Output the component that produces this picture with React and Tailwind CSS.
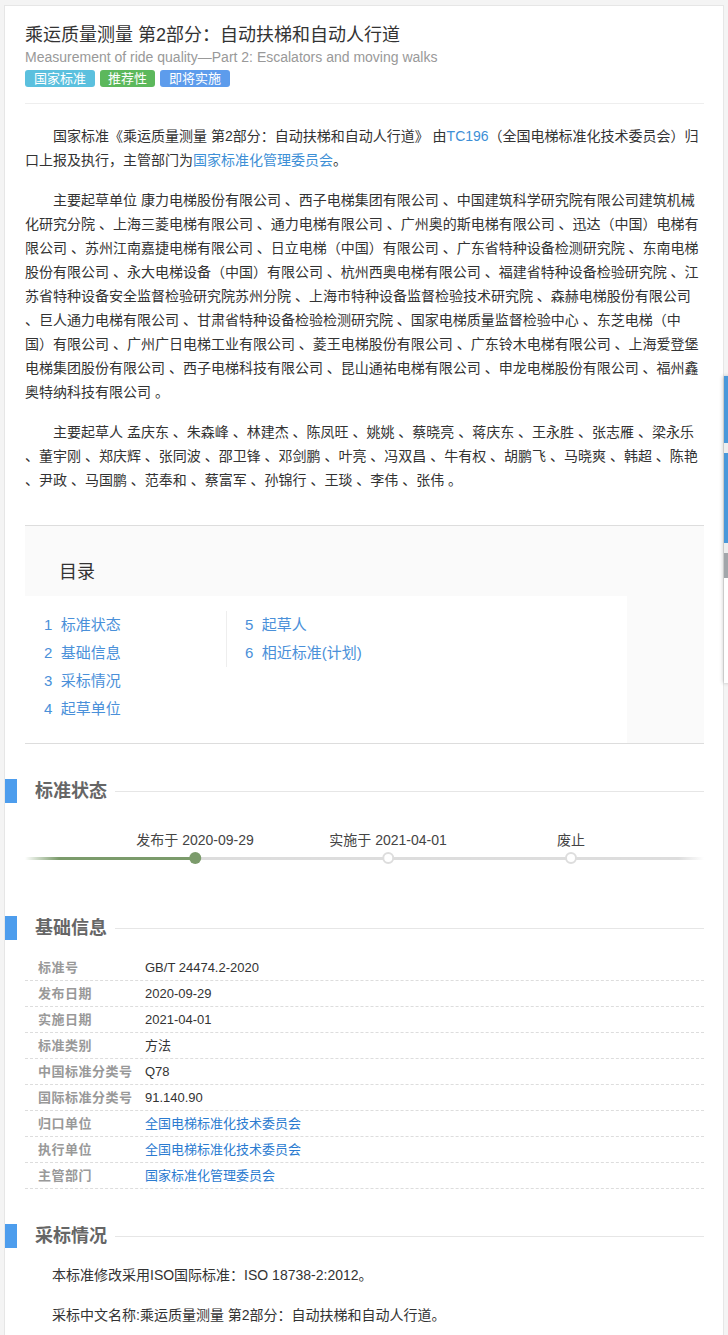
const Header = ({ children, className = '' }) => (
  <div className={`-ml-5 flex h-6 items-center ${className}`}>
    <span className="h-6 w-3 bg-[#4d9ded]" />
    <h2 className="ml-[18px] text-[18px] font-bold leading-6 text-[#666]">{children}</h2>
    <span className="ml-2 h-px flex-1 bg-[#e6e6e6]" />
  </div>
);

const rows = [
  ['标准号', 'GB/T 24474.2-2020'],
  ['发布日期', '2020-09-29'],
  ['实施日期', '2021-04-01'],
  ['标准类别', '方法'],
  ['中国标准分类号', 'Q78'],
  ['国际标准分类号', '91.140.90'],
  ['归口单位', '全国电梯标准化技术委员会', true],
  ['执行单位', '全国电梯标准化技术委员会', true],
  ['主管部门', '国家标准化管理委员会', true],
];

const units =
  '康力电梯股份有限公司 、西子电梯集团有限公司 、中国建筑科学研究院有限公司建筑机械化研究分院 、上海三菱电梯有限公司 、通力电梯有限公司 、广州奥的斯电梯有限公司 、迅达（中国）电梯有限公司 、苏州江南嘉捷电梯有限公司 、日立电梯（中国）有限公司 、广东省特种设备检测研究院 、东南电梯股份有限公司 、永大电梯设备（中国）有限公司 、杭州西奥电梯有限公司 、福建省特种设备检验研究院 、江苏省特种设备安全监督检验研究院苏州分院 、上海市特种设备监督检验技术研究院 、森赫电梯股份有限公司 、巨人通力电梯有限公司 、甘肃省特种设备检验检测研究院 、国家电梯质量监督检验中心 、东芝电梯（中国）有限公司 、广州广日电梯工业有限公司 、菱王电梯股份有限公司 、广东铃木电梯有限公司 、上海爱登堡电梯集团股份有限公司 、西子电梯科技有限公司 、昆山通祐电梯有限公司 、申龙电梯股份有限公司 、福州鑫奥特纳科技有限公司 。';

const people =
  '孟庆东 、朱森峰 、林建杰 、陈凤旺 、姚姚 、蔡晓亮 、蒋庆东 、王永胜 、张志雁 、梁永乐 、董宇刚 、郑庆辉 、张同波 、邵卫锋 、邓剑鹏 、叶亮 、冯双昌 、牛有权 、胡鹏飞 、马晓爽 、韩超 、陈艳 、尹政 、马国鹏 、范奉和 、蔡富军 、孙锦行 、王琰 、李伟 、张伟 。';

const steps = [
  { label: '发布于 2020-09-29', x: 'left-[170px]', done: true },
  { label: '实施于 2021-04-01', x: 'left-[363px]' },
  { label: '废止', x: 'left-[546px]' },
];

export default function App() {
  return (
    <div className="relative min-h-[1335px] bg-[#f4f4f4] pl-1 pt-[5px] font-['Liberation_Sans','Noto_Sans_CJK_SC',sans-serif] text-[#333]">
      <div className="w-[720px] border border-[#e6e6e6] bg-white pb-10 pl-5 pr-[19px] pt-[17px]">
        {/* title */}
        <h1 className="text-[18px] font-normal leading-6 text-[#333]">乘运质量测量 第2部分：自动扶梯和自动人行道</h1>
        <p className="text-[14px] leading-5 text-[#999]">Measurement of ride quality—Part 2: Escalators and moving walks</p>
        <div className="mt-[3px] flex gap-[5px]">
          <span className="rounded-[3px] bg-[#5bc0de] px-[9px] text-[13px] leading-[17px] text-white">国家标准</span>
          <span className="rounded-[3px] bg-[#5cb85c] px-[8px] text-[13px] leading-[17px] text-white">推荐性</span>
          <span className="rounded-[3px] bg-[#5d9cec] px-[9px] text-[13px] leading-[17px] text-white">即将实施</span>
        </div>
        <div className="mt-4 h-px bg-[#eee]" />

        {/* intro */}
        <div className="mt-5 space-y-4 text-[14px] leading-6 text-[#333]">
          <p className="indent-[28px]">
            国家标准《乘运质量测量 第2部分：自动扶梯和自动人行道》 由<a className="text-[#3d8fd6]">TC196</a>（全国电梯标准化技术委员会）归口上报及执行，主管部门为<a className="text-[#3d8fd6]">国家标准化管理委员会</a>。
          </p>
          <p className="mr-[4px] indent-[28px]">主要起草单位 {units}</p>
          <p className="indent-[28px]">主要起草人 {people}</p>
        </div>

        {/* toc */}
        <div className="mt-[33px] border-y border-[#ddd] bg-[#fafafa] pt-[34px]">
          <h3 className="pl-[34px] text-[18px] font-normal leading-6 text-[#333]">目录</h3>
          <div className="mt-3 flex w-[602px] bg-white pb-5 pt-[15px] text-[15px] leading-7 text-[#4a90d9]">
            <ul className="w-[201px] pl-[19px]">
              <li>1&nbsp; 标准状态</li>
              <li>2&nbsp; 基础信息</li>
              <li>3&nbsp; 采标情况</li>
              <li>4&nbsp; 起草单位</li>
            </ul>
            <ul className="self-start border-l border-[#eee] pl-[18px]">
              <li>5&nbsp; 起草人</li>
              <li>6&nbsp; 相近标准(计划)</li>
            </ul>
          </div>
        </div>

        {/* status */}
        <Header className="mt-[35px]">标准状态</Header>
        <div className="relative mt-[27px] h-[80px]">
          <div className="absolute left-0 top-[27px] h-[3px] w-[170px] bg-linear-to-r from-white from-0% to-[#7b9b6b] to-20%" />
          <div className="absolute left-[170px] right-0 top-[27px] h-[3px] bg-linear-to-r from-[#ddd] via-[#ddd] via-95% to-white" />
          {steps.map((s) => (
            <div key={s.label} className={`absolute top-0 ${s.x} flex -translate-x-1/2 flex-col items-center`}>
              <span className="whitespace-nowrap text-[14px] leading-5 text-[#444]">{s.label}</span>
              <span
                className={`mt-[2px] h-3 w-3 rounded-full ${
                  s.done ? 'bg-[#7b9b6b]' : 'border-2 border-[#ddd] bg-white'
                }`}
              />
            </div>
          ))}
        </div>

        {/* basic info */}
        <Header className="mt-[6px]">基础信息</Header>
        <div className="mt-[15px]">
          {rows.map(([k, v, link]) => (
            <div key={k} className="flex h-[26px] items-center border-b border-dashed border-[#ddd] text-[13px]">
              <span className="w-[120px] pl-[13px] font-bold tracking-[0.5px] text-[#999]">{k}</span>
              <span className={link ? 'text-[#2b7bd0]' : 'text-[#333]'}>{v}</span>
            </div>
          ))}
        </div>

        {/* adoption */}
        <Header className="mt-[35px]">采标情况</Header>
        <div className="mt-[15px] space-y-4 text-[14px] leading-6 text-[#333]">
          <p className="indent-[27px]">本标准修改采用ISO国际标准：ISO 18738-2:2012。</p>
          <p className="indent-[27px]">采标中文名称:乘运质量测量 第2部分：自动扶梯和自动人行道。</p>
        </div>
      </div>

      {/* floating side panel, mostly off-screen */}
      <div className="absolute left-[724px] top-[376px] flex h-[307px] w-10 flex-col bg-white shadow-[-1px_0_4px_rgba(0,0,0,0.2)]">
        <span className="h-[67px] bg-[#4a98da]" />
        <span className="h-[10px] bg-[#eee]" />
        <span className="h-[90px] bg-[#4a98da]" />
        <span className="h-[10px] bg-[#eee]" />
        <span className="h-[25px] bg-[#a2a6aa]" />
      </div>
    </div>
  );
}
